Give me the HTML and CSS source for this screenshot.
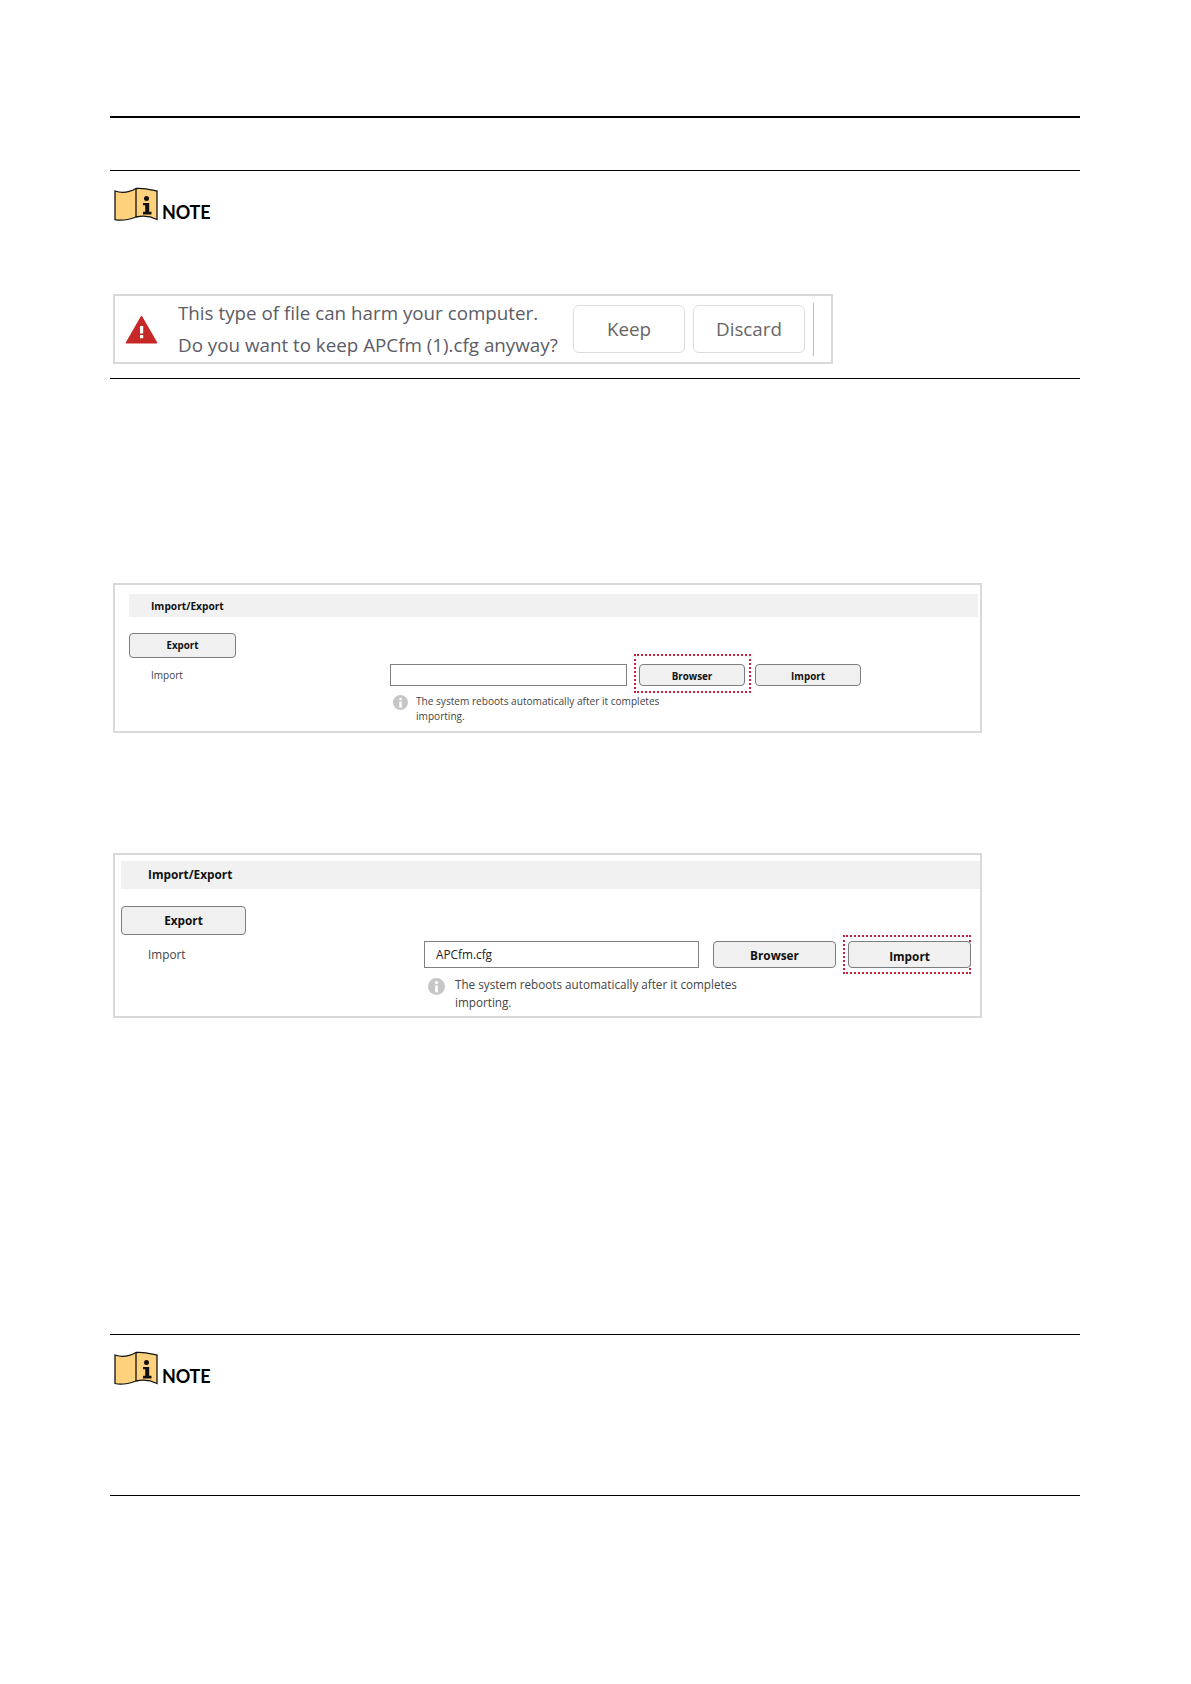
FILE: index.html
```html
<!DOCTYPE html>
<html lang="en">
<head>
<meta charset="utf-8">
<title>Import/Export</title>
<link rel="stylesheet" href="styles.css">
</head>
<body>
<main class="page">
  <div class="rule-thick"></div>

  <section class="note note-first">
    <div class="note-head">
      <svg class="note-icon" viewBox="0 0 44 34"><path d="M1 3.500C8 6 15 5 22 1C29 0 36 2 43 3.500V32C36 28.500 29 28 22 29.500C15 32 8 34 1 32Z" fill="#fed27d" stroke="#111" stroke-width="1.300"/><path d="M22 1V29.500" stroke="#111" stroke-width="1.300" fill="none"/><circle cx="32.500" cy="11" r="2.500" fill="#111"/><path d="M29 15.500H35.200V24.200H37.500V27H29V24.200H31.200V17.800H29Z" fill="#111"/></svg>
      <span class="note-title">NOTE</span>
    </div>
    <div class="alert">
      <svg class="alert-icon" viewBox="0 0 33 29"><path d="M16.500 1L32 28H1Z" fill="#c62828" stroke="#c62828" stroke-linejoin="round"/><rect x="15" y="11" width="3.200" height="7.500" fill="#fff"/><rect x="15" y="20" width="3.200" height="3.200" fill="#fff"/></svg>
      <div class="alert-text">
        <p>This type of file can harm your computer.</p>
        <p>Do you want to keep APCfm (1).cfg anyway?</p>
      </div>
      <button class="alert-btn alert-btn-keep">Keep</button>
      <button class="alert-btn">Discard</button>
      <div class="alert-divider"></div>
    </div>
  </section>

  <section class="panel panel-small">
    <h2 class="panel-head">Import/Export</h2>
    <button class="btn btn-export">Export</button>
    <div class="row">
      <span class="label">Import</span>
      <div class="field"></div>
      <div class="focus"><button class="btn btn-browse">Browser</button></div>
      <button class="btn btn-import">Import</button>
    </div>
    <div class="hint">
      <svg class="info" viewBox="0 0 16 16"><circle cx="8" cy="8" r="8" fill="#c6c6c6"/><circle cx="8" cy="4.300" r="1.500" fill="#fff"/><rect x="6.700" y="7" width="2.600" height="6.500" fill="#fff"/></svg>
      <p>The system reboots automatically after it completes importing.</p>
    </div>
  </section>

  <section class="panel panel-large">
    <h2 class="panel-head">Import/Export</h2>
    <button class="btn btn-export">Export</button>
    <div class="row">
      <span class="label">Import</span>
      <div class="field">APCfm.cfg</div>
      <button class="btn btn-browse">Browser</button>
      <div class="focus"><button class="btn btn-import">Import</button></div>
    </div>
    <div class="hint">
      <svg class="info" viewBox="0 0 16 16"><circle cx="8" cy="8" r="8" fill="#c6c6c6"/><circle cx="8" cy="4.300" r="1.500" fill="#fff"/><rect x="6.700" y="7" width="2.600" height="6.500" fill="#fff"/></svg>
      <p>The system reboots automatically after it completes importing.</p>
    </div>
  </section>

  <section class="note note-last">
    <div class="note-head">
      <svg class="note-icon" viewBox="0 0 44 34"><path d="M1 3.500C8 6 15 5 22 1C29 0 36 2 43 3.500V32C36 28.500 29 28 22 29.500C15 32 8 34 1 32Z" fill="#fed27d" stroke="#111" stroke-width="1.300"/><path d="M22 1V29.500" stroke="#111" stroke-width="1.300" fill="none"/><circle cx="32.500" cy="11" r="2.500" fill="#111"/><path d="M29 15.500H35.200V24.200H37.500V27H29V24.200H31.200V17.800H29Z" fill="#111"/></svg>
      <span class="note-title">NOTE</span>
    </div>
  </section>
</main>
</body>
</html>
```

FILE: styles.css
```css
* { box-sizing: border-box; }
html, body { margin: 0; padding: 0; background: #fff; }
body { font-family: "Open Sans", "Noto Sans", sans-serif; color: #333; }
.page { width: 1191px; height: 1684px; padding: 116px 111px 0 110px; overflow: hidden; }
.rule-thick { height: 2px; background: #000; }

.note { border-top: 1px solid #000; border-bottom: 1px solid #000; padding-top: 16px; }
.note-first { margin-top: 52px; padding-bottom: 14px; }
.note-last { margin-top: 316px; padding-bottom: 109px; }
.note-head { display: flex; align-items: flex-end; height: 35px; padding-left: 4px; gap: 4px; }
.note-icon { width: 44px; height: 35px; display: block; }
.note-title { font-family: Lato, "Liberation Sans", sans-serif; font-weight: 700; font-size: 18px; letter-spacing: -0.2px; line-height: 22px; color: #000; margin-bottom: -1px; }

.alert { display: flex; align-items: center; width: 720px; height: 70px; margin: 72px 0 0 3px; border: 2px solid #d9d9d9; padding-left: 10px; }
.alert-icon { width: 33px; height: 29px; flex: none; }
.alert-text { width: 395px; margin-left: 20px; font-size: 18.800px; line-height: 32px; color: #5c5c66; white-space: nowrap; }
.alert-text p { margin: 0; }
.alert-btn { width: 112px; height: 48px; border: 1px solid #dedede; border-radius: 6px; background: #fff; font: inherit; font-size: 18.800px; color: #666; padding: 0; }
.alert-btn-keep { margin-right: 8px; }
.alert-divider { width: 1px; height: 53px; margin-left: 8px; background: #bdbdbd; }

.panel { display: flex; flex-direction: column; width: 869px; margin-left: 3px; border: 2px solid #d9d9d9; }
.panel-head { margin: 0; background: #f1f1f1; color: #111; font-weight: 700; }
.btn { display: block; padding: 0; border: 1px solid #7d7d7d; border-radius: 4px; background: #f0f0f0; color: #111; font-family: inherit; font-weight: 700; text-align: center; }
.row { display: flex; }
.label { color: #444; }
.field { border: 1px solid #808080; background: #fff; color: #222; }
.focus { border: 2px dotted #c8213f; }
.hint { display: flex; color: #444; }
.hint p { margin: 0; }
.info { display: block; flex: none; }

.panel-small { height: 150px; margin-top: 204px; padding: 9px 2px 0 14px; }
.panel-small .panel-head { height: 23px; padding-left: 22px; font-size: 10.200px; line-height: 24px; }
.panel-small .btn { height: 22px; width: 106px; font-size: 9.800px; line-height: 20px; }
.panel-small .btn-export { width: 107px; height: 25px; margin-top: 16px; line-height: 22px; }
.panel-small .btn-browse { line-height: 23px; }
.panel-small .row { margin-top: -4px; height: 39px; align-items: flex-start; }
.panel-small .label { width: 239px; margin: 10px 0 0 22px; font-size: 10px; line-height: 22px; }
.panel-small .field { width: 237px; height: 22px; margin-top: 10px; }
.panel-small .focus { width: 117px; height: 39px; margin-left: 7px; padding: 8px 0 0 3px; }
.panel-small .btn-import { margin: 10px 0 0 4px; line-height: 23px; }
.panel-small .hint { margin: 1px 0 0 264px; }
.panel-small .info { width: 15px; height: 15px; margin-top: 1px; }
.panel-small .hint p { width: 250px; margin-left: 8px; font-size: 10.100px; line-height: 15px; }

.panel-large { height: 165px; margin-top: 120px; padding: 6px 0 0 6px; }
.panel-large .panel-head { height: 28px; padding-left: 27px; font-size: 11.800px; line-height: 26px; }
.panel-large .btn { height: 27px; width: 123px; font-size: 11.800px; line-height: 24px; }
.panel-large .btn-export { width: 125px; height: 29px; margin-top: 17px; padding-bottom: 2px; }
.panel-large .row { height: 39px; align-items: flex-start; }
.panel-large .label { width: 276px; margin: 6px 0 0 27px; font-size: 11.800px; line-height: 27px; }
.panel-large .field { width: 275px; height: 27px; margin-top: 6px; padding-left: 11px; font-size: 11.800px; line-height: 25px; }
.panel-large .btn-browse { margin: 6px 0 0 14px; }
.panel-large .focus { width: 128px; height: 39px; margin-left: 7px; padding: 4px 0 0 3px; }
.panel-large .btn-import { line-height: 28px; }
.panel-large .hint { margin: 2px 0 0 307px; }
.panel-large .info { width: 17px; height: 17px; margin-top: 2px; }
.panel-large .hint p { width: 290px; margin-left: 10px; font-size: 11.700px; line-height: 17.500px; }
```
